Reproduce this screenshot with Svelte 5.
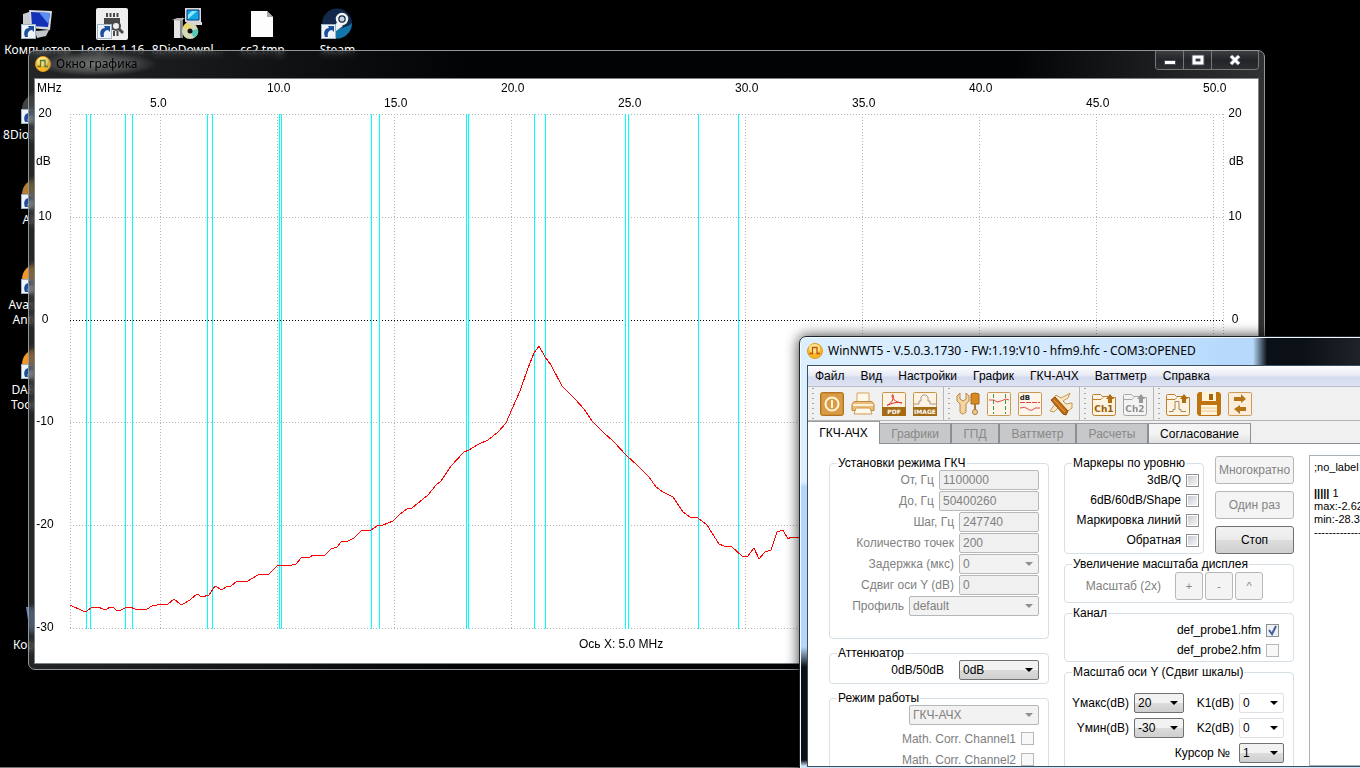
<script>
  const topIcons = [
    { icon: 'computer', label: 'Компьютер' },
    { icon: 'logic', label: 'Logic1.1.16' },
    { icon: 'setup', label: '8DioDownl...' },
    { icon: 'file', label: 'cc2.tmp' },
    { icon: 'steam', label: 'Steam' }
  ];

  const sideIcons = [
    { icon: 'dark', label: '8DioDownlo' },
    { icon: 'gold', label: 'AIMP' },
    { icon: 'orange', label: 'Avast Free Antivirus' },
    { icon: 'orange', label: 'DAEMON Tools Lite' },
    null,
    null,
    { icon: 'bin', label: 'Корзина' }
  ];

  // plot area, in pixels of the graph canvas
  const plot = { left: 35, right: 1188, top: 35, bottom: 549 };
  const levels = [
    { value: '20', y: 35 },
    { value: '10', y: 138 },
    { value: '0', y: 241 },
    { value: '-10', y: 343 },
    { value: '-20', y: 446 },
    { value: '-30', y: 549 }
  ];
  const freqs = [5, 10, 15, 20, 25, 30, 35, 40, 45, 50].map((f) => ({
    label: f.toFixed(1),
    x: 125 + Math.round((f - 5) * 23.4),
    y: f % 10 === 0 ? 13 : 28
  }));

  // amateur bands
  const bands = [51, 55, 90, 97, 172, 177, 244, 246, 336, 344, 431, 433, 499, 510, 590, 593, 663, 703];

  const curve =
    '35,526 48,532 52,532 57,528 63,528 68,530 72,530 75,528 78,528 81,531 86,531 92,528 95,528 100,530 112,530 117,527 ' +
    '122,526 133,525 139,520 145,525 148,525 155,521 162,515 167,518 174,516 180,507 187,511 191,508 196,507 202,502 ' +
    '211,503 223,496 234,495 243,486 253,487 261,485 266,479 275,478 278,476 290,476 296,470 302,468 306,463 313,462 ' +
    '319,459 326,452 336,451 342,447 348,446 358,442 365,435 372,430 377,429 393,416 401,406 406,402 416,387 429,373 ' +
    '434,371 442,366 453,361 463,353 471,344 477,330 485,312 493,289 499,274 504,267 510,278 516,286 527,307 540,320 ' +
    '549,330 557,342 569,354 578,362 592,377 602,386 614,398 621,408 628,413 638,418 648,433 655,438 663,439 672,446 ' +
    '684,465 689,467 697,468 707,477 713,477 719,469 724,480 730,473 736,471 742,453 748,451 753,460 756,458 770,458';

  const menu = ['Файл', 'Вид', 'Настройки', 'График', 'ГКЧ-АЧХ', 'Ваттметр', 'Справка'];

  const toolGroups = [
    ['power', 'print', 'pdf', 'image'],
    ['tools', 'marks', 'level', 'knife'],
    ['ch1', 'ch2'],
    ['open', 'save', 'swap']
  ];

  const tabs = [
    { name: 'ГКЧ-АЧХ', state: 'active', width: 72 },
    { name: 'Графики', state: 'off', width: 72 },
    { name: 'ГПД', state: 'off', width: 48 },
    { name: 'Ваттметр', state: 'off', width: 77 },
    { name: 'Расчеты', state: 'off', width: 72 },
    { name: 'Согласование', state: 'on', width: 102 }
  ];

  const sweep = [
    { id: 'from', label: 'От, Гц', value: '1100000', size: 'wide' },
    { id: 'to', label: 'До, Гц', value: '50400260', size: 'wide' },
    { id: 'step', label: 'Шаг, Гц', value: '247740', size: 'mid' },
    { id: 'count', label: 'Количество точек', value: '200', size: 'mid' },
    { id: 'delay', label: 'Задержка (мкс)', value: '0', size: 'mid', select: true },
    { id: 'shift', label: 'Сдвиг оси Y (dB)', value: '0', size: 'mid' },
    { id: 'profile', label: 'Профиль', value: 'default', size: 'full', select: true }
  ];

  const markers = ['3dB/Q', '6dB/60dB/Shape', 'Маркировка линий', 'Обратная'];
  const channels = [
    { name: 'def_probe1.hfm', checked: true, disabled: false },
    { name: 'def_probe2.hfm', checked: false, disabled: true }
  ];
</script>

{#snippet appIcon(line)}
  <svg class="app-icon" width="16" height="16" viewBox="0 0 16 16">
    <circle cx="8" cy="8" r="7.5" fill="#f8b82c" stroke="#e09a18" />
    <ellipse cx="7.500" cy="5.500" rx="5.500" ry="4.500" fill="#fff0a0" opacity=".8" />
    <path d="M2.500 10.500h3v-6h4.500v6h3" fill="none" stroke={line} stroke-width="1.300" />
  </svg>
{/snippet}

{#snippet shortcut()}
  <rect x="0.500" y="16.500" width="14" height="14" fill="#eef4fa" stroke="#9fb2c4" />
  <path d="M4 29c-2-5 0-9 4-9l-1-2h6v6l-2-2c-3 0-5 3-4 7z" fill="#1d4f9c" />
{/snippet}

{#snippet desktopIcon(item)}
  <a class="shortcut" href="#{item.icon}">
    <svg width="32" height="32" viewBox="0 0 32 32">
      {#if item.icon === 'computer'}
        <path d="M2 6l9-3v17l-9-3z" fill="#c8ccd0" />
        <path d="M8 2l23 1-2 19-19-2z" fill="#d6dade" />
        <path d="M10 4l19 1-2 14-16-1z" fill="#1230b8" />
        <path d="M18 4.500l11 .5-1.500 11z" fill="#5b8cf0" />
        <path d="M14 23l14-1-3 6-9 2z" fill="#c4c7c9" />
        {@render shortcut()}
      {:else if item.icon === 'logic'}
        <rect width="32" height="32" rx="2" fill="#efefef" />
        <path d="M10 5h2v4h-2zm3.500 0h2v4h-2zm3.500 0h2v4h-2zm3.500 0h2v4h-2zM17 23h2v5h-2zm3.500 0h2v5h-2z" fill="#4a4a4a" />
        <path d="M8 10h16v12H8z" fill="#4a4a4a" />
        <circle cx="20" cy="18" r="4" fill="#efefef" stroke="#4a4a4a" stroke-width="2" />
        <path d="M23 21l4 4" stroke="#4a4a4a" stroke-width="3" />
        <g transform="translate(1 0)">{@render shortcut()}</g>
      {:else if item.icon === 'setup'}
        <path d="M14 0h16v14H14zM13 17h18v-3H16z" fill="#d8d8d8" />
        <path d="M16 2h12v10H16z" fill="#10a8e0" stroke="#103a8c" />
        <path d="M17 11l9-8h-5l-4 4z" fill="#8ce8ff" />
        <path d="M3 12h6v18H3z" fill="#e4e4e4" />
        <path d="M9 12l3-3v21H9z" fill="#8a8a8a" />
        <path d="M1 12l5-2h8l-4 3z" fill="#b4b4b4" />
        <circle cx="19" cy="23" r="8" fill="#d5d9b8" />
        <path d="M19 23l-7-4a8 8 0 0 1 6-4z" fill="#f2d858" />
        <path d="M19 23l8-2a8 8 0 0 1-4 9z" fill="#58c8b8" />
        <circle cx="19" cy="23" r="2.500" fill="#111" />
      {:else if item.icon === 'file'}
        <path d="M5 3h16l6 6v20H5z" fill="#fdfdfd" />
        <path d="M21 3v6h6z" fill="#a8a8a8" />
      {:else if item.icon === 'steam'}
        <circle cx="16" cy="15.500" r="15" fill="#14284c" />
        <path d="M3 23a15 15 0 0 0 28-8c-4 4-12 6-28 8z" fill="#1274a8" />
        <circle cx="21" cy="11" r="5" fill="none" stroke="#f2f4f6" stroke-width="2.500" />
        <circle cx="21" cy="11" r="2.500" fill="#c8d0d8" />
        <path d="M17 13l-5 7 3 3 7-5z" fill="#f2f4f6" />
        {@render shortcut()}
      {:else if item.icon === 'bin'}
        <path d="M5 4h24l-4 26H9z" fill="#6688b8" />
      {:else}
        <circle cx="16" cy="16" r="15" class={item.icon} />
        {@render shortcut()}
      {/if}
    </svg>
    <span>{item.label}</span>
  </a>
{/snippet}

{#snippet toolIcon(name)}
  <svg width="24" height="24" viewBox="0 0 24 24">
    {#if name === 'power'}
      <rect x=".5" y=".5" width="23" height="23" rx="2" fill="#cf8d30" stroke="#b07420" />
      <rect x="2" y="2" width="20" height="20" fill="#d99c44" />
      <circle cx="12" cy="12" r="6.500" fill="none" stroke="#fff4dc" stroke-width="2" />
      <path d="M12 8v8" stroke="#fff4dc" stroke-width="2" />
    {:else if name === 'print'}
      <path d="M6 1h12v10H6z" fill="#fff8ea" stroke="#d9a65c" />
      <path d="M3 9.500h18l2 3v6H1v-6z" fill="#e8bd7c" stroke="#c48838" />
      <path d="M2 13h20" stroke="#fff0d4" stroke-width="2" />
      <path d="M5 16h14l2 6H3z" fill="#fff8ea" stroke="#d09a4c" />
    {:else if name === 'pdf' || name === 'image'}
      <rect x=".5" y=".5" width="23" height="23" rx="1" fill="#fdf3e4" stroke="#c89448" />
      {#if name === 'pdf'}
        <path d="M5 13.500c6-3 7-8 6-11-3 1 1 8 9 8.500-4-1.500-10 0-15 2.500z" fill="none" stroke="#e0302c" />
      {:else}
        <path d="M1 12h5v-3l2 0V5l2-2h3l2 2v4h2v3h6" fill="none" stroke="#a89888" />
      {/if}
      <path d="M0 15h24v9H0z" fill="#a46a14" />
      <text x="12" y="22" class="tag">{name === 'pdf' ? 'PDF' : 'IMAGE'}</text>
    {:else if name === 'tools'}
      <path d="M1 4v5l3 3v8q2 4 6 0v-8l3-3V4l-3-3v6l-3 2-3-2V1z" fill="#f4d4a0" stroke="#b88848" />
      <path d="M15 2q4-2 8 0v10h-8z" fill="#d68a20" stroke="#a86810" />
      <path d="M18 12h2v6h-2z" fill="#a87838" />
      <circle cx="19" cy="20" r="2.500" fill="#f0cc94" stroke="#a87838" />
    {:else if name === 'marks' || name === 'level'}
      <rect x=".5" y=".5" width="23" height="23" rx="1" fill="#fdf5ea" stroke="#cc9a58" />
      {#if name === 'marks'}
        <path d="M6.500 2v20M18.500 2v20" stroke="#3a9a50" stroke-dasharray="4 2" />
        <path d="M2 8h5l3 2 4-1 5-2 3 1" fill="none" stroke="#e04848" />
      {:else}
        <text x="7" y="8" class="db">dB</text>
        <path d="M2 10.500h20" stroke="#e04848" stroke-dasharray="5 1" />
        <path d="M2 16q5-2 8 1t7-1l5 0" fill="none" stroke="#e04848" />
      {/if}
    {:else if name === 'knife'}
      <path d="M4 7l3-4 5 3 6-3 3-2-2 5-5 3 3 3 6-1v5l-4 3-8-5-6 6-4-1 5-7z" fill="#fbe8c8" stroke="#c89850" />
      <path d="M2 8l4-3 13 14-2 4-3-1z" fill="#c06c14" stroke="#8c4c08" />
      <path d="M5 8l11 12" stroke="#f0a048" />
    {:else if name === 'ch1' || name === 'ch2' || name === 'open'}
      <g class:gray={name === 'ch2'}>
        <path d="M.5 5V3.500q0-1 1-1h7l2 2h6l2 1h5v16q0 2-2 2h-19q-2 0-2-2z" fill="#fdf3e2" stroke="#b88030" />
        <path d="M1 7.500h8l2-2" fill="none" stroke="#b88030" />
        <path d="M18 2l4 5h-2v4h-4V7h-2z" fill="#b06c10" />
        {#if name === 'open'}
          <path d="M3 19.500h4v-2h2v-8h4v8h2v2h5" fill="none" stroke="#a88458" />
        {:else}
          <text x="12" y="20" class="ch">{name === 'ch1' ? 'Ch1' : 'Ch2'}</text>
        {/if}
      </g>
    {:else if name === 'save'}
      <path d="M2 0h20l2 2v20l-2 2H2l-2-2V2z" fill="#c07410" />
      <rect x="5" y="0" width="14" height="9" fill="#fff3dc" />
      <rect x="12" y="2" width="4" height="6" fill="#a86408" />
      <rect x="4" y="13" width="16" height="10" fill="#fff3dc" />
      <path d="M4 16h16M4 19h16" stroke="#e8c890" />
    {:else}
      <rect x=".5" y=".5" width="23" height="23" rx="1" fill="#fdeedb" stroke="#d09a58" />
      <path d="M6 5h7V2l5 5-5 4V9H6zM18 15h-6v-2l-6 4 6 5v-3h6z" fill="#b87418" />
    {/if}
  </svg>
{/snippet}

<main class="desktop">
  <nav class="icons">
    <div class="icon-row">
      {#each topIcons as item}
        {@render desktopIcon(item)}
      {/each}
    </div>
    <div class="icon-column">
      {#each sideIcons as item}
        {#if item}
          {@render desktopIcon(item)}
        {:else}
          <div class="shortcut"></div>
        {/if}
      {/each}
    </div>
  </nav>

  <div class="taskbar"></div>

  <section class="window graph-window">
    <header class="graph-title">
      {@render appIcon('#5c7a1c')}
      <h1>Окно графика</h1>
      <div class="window-buttons">
        <button aria-label="Свернуть">
          <svg width="14" height="12" viewBox="0 0 14 12"><rect x="1.500" y="6.500" width="11" height="4" fill="#fff" stroke="#4c4c5c" /></svg>
        </button>
        <button aria-label="Развернуть">
          <svg width="14" height="12" viewBox="0 0 14 12"><path d="M3 3h8v6H3z" fill="none" stroke="#4c4c5c" stroke-width="5" /><path d="M3 3h8v6H3z" fill="none" stroke="#fff" stroke-width="3" /></svg>
        </button>
        <button class="close" aria-label="Закрыть">
          <svg width="14" height="12" viewBox="0 0 14 12"><path d="M3 2l8 8M11 2l-8 8" stroke="#4c4c5c" stroke-width="5" /><path d="M3 2l8 8M11 2l-8 8" stroke="#fff" stroke-width="3" /></svg>
        </button>
      </div>
    </header>
    <div class="graph-body">
      <svg class="graph" width="1223" height="584" viewBox="0 0 1223 584">
        <g class="grid">
          {#each levels as l}
            <path d="M{plot.left} {l.y}.5H{plot.right}" class:zero={l.value === '0'} />
          {/each}
          {#each freqs as f}
            <path d="M{f.x}.5 {plot.top}V{plot.bottom}" />
          {/each}
          <path d="M{plot.left}.5 {plot.top}V{plot.bottom}" />
          <path d="M{plot.right}.5 {plot.top}V{plot.bottom}" />
        </g>
        {#each bands as x}
          <rect {x} y={plot.top} width="1" height={plot.bottom - plot.top + 1} fill="#00ffff" />
        {/each}
        <polyline points={curve} class="curve" />
        <text x="2" y="13">MHz</text>
        {#each freqs as f}
          <text x={f.x - 10} y={f.y}>{f.label}</text>
        {/each}
        {#each levels as l}
          <text x="10" y={l.y + 3} text-anchor="middle">{l.value}</text>
          {#if l.y < 300}
            <text x="1200" y={l.y + 3} text-anchor="middle">{l.value}</text>
          {/if}
        {/each}
        <text x="1" y="86">dB</text>
        <text x="1194" y="86">dB</text>
        <text x="544" y="569">Ось X: 5.0 MHz</text>
      </svg>
    </div>
  </section>

  <section class="window nwt-window">
    <header class="nwt-title">
      {@render appIcon('#c0501c')}
      <h1>WinNWT5 - V.5.0.3.1730 - FW:1.19:V10 - hfm9.hfc - COM3:OPENED</h1>
    </header>
    <div class="nwt-body">
      <nav class="menu">
        {#each menu as item}
          <button>{item}</button>
        {/each}
      </nav>

      <div class="toolbar">
        {#each toolGroups as group}
          <div class="tool-group">
            {#each group as name}
              <button aria-label={name} disabled={name === 'ch2'}>{@render toolIcon(name)}</button>
            {/each}
          </div>
        {/each}
      </div>

      <div class="tabs">
        {#each tabs as tab}
          <button class={tab.state} style="width: {tab.width}px" disabled={tab.state === 'off'}>{tab.name}</button>
        {/each}
      </div>

      <div class="page">
        <div class="column left">
          <fieldset class="sweep">
            <legend>Установки режима ГКЧ</legend>
            {#each sweep as row}
              <div class="field off">
                <label for={row.id}>{row.label}</label>
                {#if row.select}
                  <select id={row.id} class={row.size} disabled><option>{row.value}</option></select>
                {:else}
                  <input id={row.id} class={row.size} value={row.value} disabled />
                {/if}
              </div>
            {/each}
          </fieldset>

          <fieldset class="attenuator">
            <legend>Аттенюатор</legend>
            <div class="field spaced">
              <label for="att">0dB/50dB</label>
              <select id="att" class="mid"><option>0dB</option></select>
            </div>
          </fieldset>

          <fieldset class="mode">
            <legend>Режим работы</legend>
            <div class="field off">
              <select class="full" aria-label="Режим работы" disabled><option>ГКЧ-АЧХ</option></select>
            </div>
            <label class="check off">Math. Corr. Channel1 <input type="checkbox" disabled /></label>
            <label class="check off">Math. Corr. Channel2 <input type="checkbox" disabled /></label>
          </fieldset>
        </div>

        <div class="column right">
          <div class="run">
            <fieldset class="markers">
              <legend>Маркеры по уровню</legend>
              {#each markers as name}
                <label class="check">{name} <input type="checkbox" /></label>
              {/each}
            </fieldset>
            <div class="run-buttons">
              <button class="push" disabled>Многократно</button>
              <button class="push" disabled>Один раз</button>
              <button class="push">Стоп</button>
            </div>
          </div>

          <fieldset class="zoom">
            <legend>Увеличение масштаба дисплея</legend>
            <div class="zoom-row">
              <span>Масштаб (2x)</span>
              <button class="push" disabled>+</button>
              <button class="push" disabled>-</button>
              <button class="push" disabled>^</button>
            </div>
          </fieldset>

          <fieldset class="channel">
            <legend>Канал</legend>
            {#each channels as c}
              <label class="check">{c.name} <input type="checkbox" checked={c.checked} disabled={c.disabled} /></label>
            {/each}
          </fieldset>

          <fieldset class="scale">
            <legend>Масштаб оси Y (Сдвиг шкалы)</legend>
            <div class="scale-grid">
              <label for="ymax">Yмакс(dB)</label>
              <select id="ymax"><option>20</option></select>
              <label for="k1">K1(dB)</label>
              <select id="k1" class="flat"><option>0</option></select>
              <label for="ymin">Yмин(dB)</label>
              <select id="ymin"><option>-30</option></select>
              <label for="k2">K2(dB)</label>
              <select id="k2" class="flat"><option>0</option></select>
              <label for="cursor" class="cursor">Курсор №</label>
              <select id="cursor"><option>1</option></select>
            </div>
          </fieldset>
        </div>

        <pre class="log">;no_label

<b>|||||</b> 1
max:-2.62
min:-28.36
---------------------</pre>
      </div>
    </div>
  </section>
</main>

<style>
  :global(body) {
    background: #000;
    overflow: hidden;
  }

  .desktop {
    position: relative;
    height: 100vh;
    overflow: hidden;
    background: #000;
    color: #000;
    font: 12px/14px "Liberation Sans", Arial, sans-serif;
  }

  .desktop * {
    box-sizing: border-box;
  }

  button,
  input,
  select {
    font: inherit;
    color: inherit;
    margin: 0;
  }

  h1 {
    margin: 0;
    font: 12px/16px "Noto Sans", "Segoe UI", sans-serif;
    white-space: nowrap;
  }

  /* desktop */

  .icon-row {
    display: flex;
  }

  .shortcut {
    display: flex;
    flex-direction: column;
    align-items: center;
    width: 75px;
    height: 85px;
    padding-top: 8px;
    overflow: hidden;
    color: #fff;
    font: 12px/15px "Noto Sans", "Segoe UI", sans-serif;
    text-align: center;
    text-decoration: none;
  }

  .shortcut svg {
    flex: none;
    margin: 0 2px 2px 0;
  }

  .dark {
    fill: #444;
  }

  .gold {
    fill: #b08030;
  }

  .orange {
    fill: #f0962c;
  }

  .taskbar {
    position: absolute;
    left: 0;
    right: 0;
    bottom: 0;
    height: 1px;
    background: #777;
  }

  /* windows */

  .window {
    position: absolute;
    border-radius: 7px;
  }

  .app-icon {
    flex: none;
  }

  .graph-window {
    top: 50px;
    left: 28px;
    right: 95px;
    padding: 0 5px 5px;
    border: 1px solid #90979b;
    background: linear-gradient(to right, rgba(60, 63, 66, 0.6), rgba(3, 6, 9, 0.6) 35%, rgba(3, 6, 9, 0.6) 80%, rgba(60, 62, 64, 0.8));
    backdrop-filter: blur(3px);
  }

  .graph-title {
    display: flex;
    align-items: center;
    gap: 5px;
    height: 27px;
    padding: 0 0 2px 1px;
  }

  .graph-title h1 {
    background: radial-gradient(closest-side, rgba(150, 150, 150, 0.7), rgba(120, 120, 120, 0.5) 60%, transparent);
    padding: 4px 20px;
    margin: 0 -20px;
  }

  .window-buttons {
    display: flex;
    align-self: flex-start;
    height: 19px;
    margin-left: auto;
    border: 1px solid #777;
    border-top: 0;
    border-radius: 0 0 4px 4px;
    overflow: hidden;
  }

  .window-buttons button {
    display: flex;
    align-items: center;
    justify-content: center;
    width: 28px;
    padding: 0;
    border: 0;
    border-right: 1px solid #777;
    background: linear-gradient(#3c3e40, #222528 50%, #2c2e30);
  }

  .window-buttons .close {
    width: 46px;
    border: 0;
  }

  .graph-body {
    border: 1px solid #7d8488;
    background: #fff;
    overflow: hidden;
  }

  .graph {
    display: block;
  }

  .graph text {
    font: 12px "Liberation Sans", Arial, sans-serif;
  }

  .grid path {
    stroke: #b4b4b4;
    stroke-dasharray: 1 2;
    shape-rendering: crispEdges;
  }

  .grid .zero {
    stroke: #000;
  }

  .curve {
    fill: none;
    stroke: #f00;
    shape-rendering: crispEdges;
  }

  .nwt-window {
    top: 336px;
    left: 799px;
    right: -80px;
    bottom: -7px;
    display: flex;
    flex-direction: column;
    padding: 0 7px 7px;
    border: 1px solid #1c242c;
    background: linear-gradient(#dcefff, #dcefff 145px, #b4d6fa 150px, #b4d6fa 310px, #0b1016 330px, #0b1016 calc(100% - 14px), #cfe6fb calc(100% - 8px));
    box-shadow: inset 0 0 0 1px #f4faff, 0 0 14px rgba(0, 0, 0, 0.8);
  }

  .nwt-title {
    display: flex;
    align-items: center;
    gap: 5px;
    height: 27px;
    margin: 1px -6px 0;
    padding: 0 0 2px 6px;
    border-radius: 6px 6px 0 0;
    background: linear-gradient(to right, #dcefff, #d0e8ff 300px, #b7dafc 420px, #b7dafc 452px, #0b1016 466px, #0b1016 500px, #3a3d42 100%);
  }

  .nwt-body {
    flex: 1;
    display: flex;
    flex-direction: column;
    min-height: 0;
    border: 1px solid #3c5064;
    background: #f0f0f0;
  }

  .menu {
    display: flex;
    gap: 1px;
    height: 21px;
    border-bottom: 1px solid #b8bcc8;
    background: linear-gradient(#fff, #e6e9f5 50%, #d3daee 55%, #dde3f2);
  }

  .menu button {
    padding: 0 8px 0 7px;
    border: 0;
    background: none;
  }

  .toolbar {
    display: flex;
    height: 34px;
    border-bottom: 1px solid #b4b4b4;
  }

  .tool-group {
    display: flex;
    align-items: center;
    gap: 7px;
    padding: 0 6px 0 12px;
    border-right: 1px solid #b8b8b8;
    background: radial-gradient(circle, #a8a8a8 1px, transparent 1px) 3px 4px / 4px 5px repeat-y;
  }

  .tool-group:last-child {
    border: 0;
  }

  .tool-group button {
    width: 24px;
    height: 24px;
    padding: 0;
    border: 0;
    background: none;
  }

  .toolbar svg {
    display: block;
  }

  .tag,
  .ch,
  .db {
    font: bold 6px "DejaVu Sans", sans-serif;
    text-anchor: middle;
    fill: #fff;
  }

  .ch {
    font-size: 9px;
    fill: #9c5c08;
  }

  .db {
    font-size: 7px;
    fill: #222;
  }

  .gray {
    filter: grayscale(1) opacity(0.7);
  }

  .tabs {
    display: flex;
    align-items: flex-end;
    height: 23px;
    border-bottom: 1px solid #8a8e96;
  }

  .tabs button {
    height: 20px;
    padding: 0;
    border: 0;
    border-top: 1px solid #9a9ea4;
    border-right: 2px solid #8c9096;
    background: #c6c8ca;
    color: #888;
    white-space: nowrap;
  }

  .tabs .active {
    height: 23px;
    margin-bottom: -1px;
    border-right-width: 1px;
    background: #fff;
    color: #000;
  }

  .tabs .on {
    border-right-width: 1px;
    background: linear-gradient(#f4f4f4 50%, #e0e0e0);
    color: #000;
  }

  .page {
    flex: 1;
    display: flex;
    min-height: 0;
    padding: 12px 0 0 21px;
    background: #fff;
    overflow: hidden;
  }

  .column {
    display: flex;
    flex-direction: column;
    flex: none;
  }

  .left {
    width: 220px;
    gap: 7px;
    margin-right: 15px;
  }

  .right {
    width: 230px;
    gap: 3px;
    margin-right: 15px;
  }

  fieldset {
    flex: none;
    min-width: 0;
    margin: 0;
    padding: 0 9px;
    border: 1px solid #d5dfe5;
    border-radius: 4px;
  }

  legend {
    height: 14px;
    padding: 0 1px;
    margin-left: -2px;
    white-space: nowrap;
  }

  .left legend {
    margin-bottom: -1px;
  }

  .sweep {
    height: 183px;
  }

  .attenuator {
    height: 38px;
  }

  .field {
    display: flex;
    align-items: center;
    justify-content: flex-end;
    gap: 5px;
    height: 21px;
  }

  .spaced {
    gap: 15px;
  }

  .off {
    color: #808080;
  }

  input:not([type]),
  select {
    height: 20px;
    padding: 0 3px;
    border: 1px solid #b4b8b8;
    border-radius: 2px;
    background-color: #f0f0f0;
  }

  select {
    appearance: none;
    border-color: #707070;
    background: url("data:image/svg+xml,%3Csvg xmlns='http://www.w3.org/2000/svg' width='8' height='4'%3E%3Cpath d='M0 0h8L4 4z'/%3E%3C/svg%3E") no-repeat right 5px center,
      linear-gradient(#f2f2f2 50%, #dcdcdc 50%, #cfcfcf);
  }

  select:disabled {
    border-color: #b4b8b8;
    background: url("data:image/svg+xml,%3Csvg xmlns='http://www.w3.org/2000/svg' width='8' height='4'%3E%3Cpath d='M0 0h8L4 4z' fill='%23909090'/%3E%3C/svg%3E") #f2f2f2 no-repeat right 5px center;
    opacity: 1;
  }

  select.flat {
    border-color: #dde1e6;
    background: url("data:image/svg+xml,%3Csvg xmlns='http://www.w3.org/2000/svg' width='8' height='4'%3E%3Cpath d='M0 0h8L4 4z'/%3E%3C/svg%3E") #fff no-repeat right 5px center;
  }

  .wide {
    width: 100px;
  }

  .mid {
    width: 80px;
  }

  .full {
    width: 130px;
  }

  .check {
    display: flex;
    align-items: center;
    justify-content: flex-end;
    gap: 5px;
    height: 20px;
    white-space: nowrap;
  }

  .check input {
    appearance: none;
    width: 13px;
    height: 13px;
    border: 1px solid #8e8f8f;
    background: linear-gradient(135deg, #c8ccd2, #f6f6f6) content-box;
    padding: 1px;
  }

  .check input:disabled {
    border-color: #b8b8b8;
    background: #f8f8f8;
  }

  .check input:checked {
    background: url("data:image/svg+xml,%3Csvg xmlns='http://www.w3.org/2000/svg' width='11' height='11'%3E%3Cpath d='M2 5l3 4 4-8' fill='none' stroke='%23405fa0' stroke-width='2'/%3E%3C/svg%3E") #eef0f4 no-repeat center;
  }

  .mode {
    height: 90px;
  }

  .mode .check {
    height: 21px;
    padding-right: 5px;
  }

  .mode .field {
    height: 24px;
    align-items: flex-start;
    padding-top: 1px;
  }

  .run {
    display: flex;
    justify-content: space-between;
  }

  .markers {
    width: 140px;
    height: 98px;
    padding-right: 4px;
  }

  .run-buttons {
    display: flex;
    flex-direction: column;
    gap: 7px;
    width: 79px;
  }

  .push {
    height: 28px;
    padding: 0;
    border: 1px solid #707070;
    border-radius: 3px;
    background: linear-gradient(#f2f2f2, #ebebeb 50%, #dddddd 50%, #cfcfcf);
  }

  .push:disabled {
    border-color: #b4b8b8;
    background: #f4f4f4;
    color: #848484;
  }

  .zoom {
    height: 46px;
  }

  .zoom-row {
    display: flex;
    align-items: center;
    justify-content: flex-end;
    gap: 2px;
    padding: 1px 21px 0 0;
  }

  .zoom-row span {
    margin-right: 12px;
    color: #808080;
  }

  .zoom-row .push {
    width: 28px;
    font-size: 11px;
  }

  .channel {
    height: 56px;
    padding-right: 14px;
  }

  .scale {
    height: 120px;
  }

  .scale-grid {
    display: grid;
    grid-template-columns: 58px 50px 45px 45px;
    column-gap: 5px;
    row-gap: 5px;
    align-items: center;
    justify-content: end;
    padding-top: 14px;
    text-align: right;
    white-space: nowrap;
  }

  .cursor {
    grid-column: span 3;
    padding-right: 4px;
  }

  .log {
    flex: 1;
    margin: -1px 0 0;
    padding: 5px 4px;
    border: 1px solid #a8b0b8;
    font: 11px/13px "Liberation Sans", Arial, sans-serif;
    overflow: hidden;
  }
</style>
